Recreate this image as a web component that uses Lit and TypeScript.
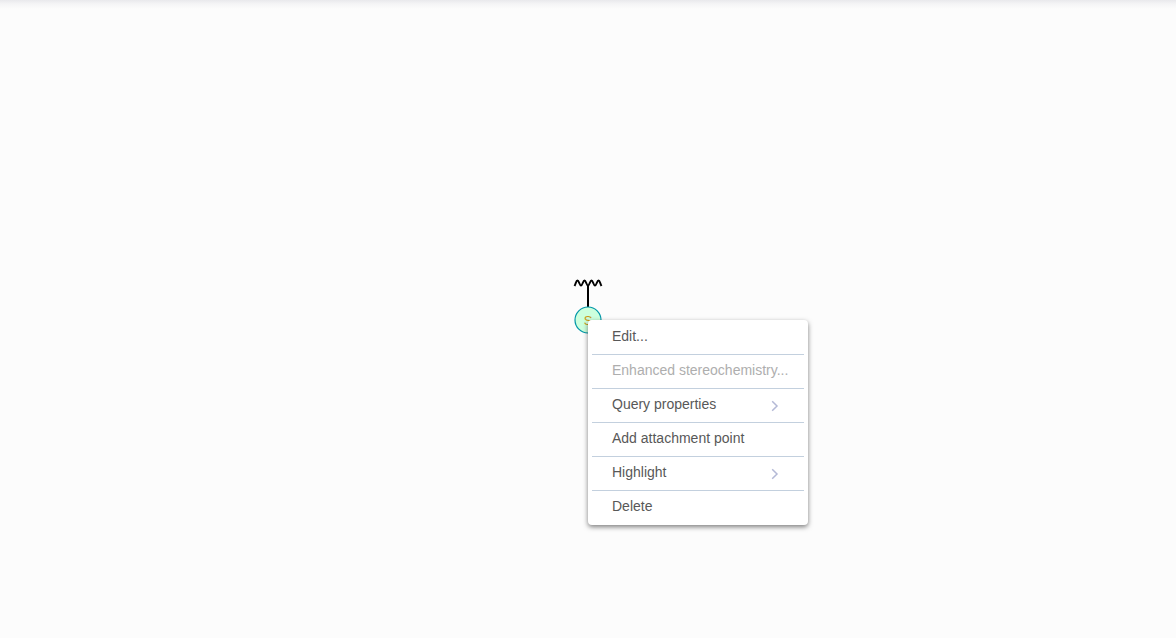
import { LitElement, html, css, svg, nothing } from "lit";
import { customElement, property } from "lit/decorators.js";

interface MenuEntry {
  label: string;
  disabled?: boolean;
  submenu?: boolean;
}

const ENTRIES: MenuEntry[] = [
  { label: "Edit..." },
  { label: "Enhanced stereochemistry...", disabled: true },
  { label: "Query properties", submenu: true },
  { label: "Add attachment point" },
  { label: "Highlight", submenu: true },
  { label: "Delete" },
];

const chevron = html`<svg class="chevron" viewBox="0 0 8 12" aria-hidden="true">
  ${svg`<path d="M1.2 1.2 L6 6 L1.2 10.8" fill="none" stroke="#b4b9d6" stroke-width="1.5"/>`}
</svg>`;

@customElement("context-menu")
export class ContextMenu extends LitElement {
  static styles = css`
    :host {
      display: block;
      box-sizing: border-box;
      width: 220px;
      padding: 1px 4px;
      border-radius: 4px;
      background: #fff;
      box-shadow: 0 2px 5px rgba(0, 0, 0, 0.5);
    }
    .list {
      margin: 0;
      padding: 0;
      list-style: none;
    }
    .row + .row {
      border-top: 1px solid #c3d0de;
    }
    .item {
      display: flex;
      align-items: center;
      justify-content: space-between;
      width: 100%;
      height: 33px;
      margin: 0;
      padding: 0 25px 4px 20px;
      border: 0;
      background: none;
      color: #585858;
      font: 14px/16px "Liberation Sans", Arial, sans-serif;
      text-align: left;
      white-space: nowrap;
    }
    .item:disabled {
      padding-right: 0;
      color: #aeaeae;
    }
    .chevron {
      width: 8px;
      height: 12px;
      padding-top: 4px;
    }
  `;

  @property({ attribute: false }) entries: MenuEntry[] = [];

  render() {
    return html`<ul class="list" role="menu">
      ${this.entries.map(
        (e) => html`<li class="row" role="none">
          <button class="item" type="button" role="menuitem" ?disabled=${e.disabled}>
            <span>${e.label}</span>${e.submenu ? chevron : nothing}
          </button>
        </li>`
      )}
    </ul>`;
  }
}

@customElement("app-root")
export class AppRoot extends LitElement {
  static styles = css`
    :host {
      display: block;
    }
    .canvas {
      position: relative;
      min-height: 100vh;
      overflow: hidden;
      background: linear-gradient(#e9e9ec, #f5f5f6 4px, #fcfcfc 9px);
    }
    .structure {
      position: absolute;
      top: 270px;
      left: 50%;
      width: 40px;
      height: 70px;
      margin-left: -20px;
    }
    .atom {
      font: 13px "Liberation Sans", Arial, sans-serif;
    }
    .menu {
      position: absolute;
      top: 320px;
      left: 50%;
    }
  `;

  render() {
    return html`<main class="canvas">
      <svg class="structure" viewBox="0 0 40 70" role="img" aria-label="Sulfur atom with attachment point">
        <path
          d="M6.5 16 C8 13.5 8 10.5 9.5 10.5 S11.5 15.5 13 15.5 S15 10.5 16.5 10.5 S18.5 15.5 20 15.5 S22 10.5 23.5 10.5 S25.5 15.5 27 15.5 S29 10.5 30.5 10.5 C32 10.5 32 13.5 33.5 16"
          fill="none" stroke="#000" stroke-width="2"/>
        <path d="M20 15 V37" stroke="#000" stroke-width="2"/>
        <circle cx="20" cy="50" r="13" fill="#ccffdd" stroke="#0097a8" stroke-width="1.2"/>
        <text class="atom" x="20" y="55" text-anchor="middle" fill="#c99a19">S</text>
      </svg>
      <context-menu class="menu" .entries=${ENTRIES}></context-menu>
    </main>`;
  }
}
